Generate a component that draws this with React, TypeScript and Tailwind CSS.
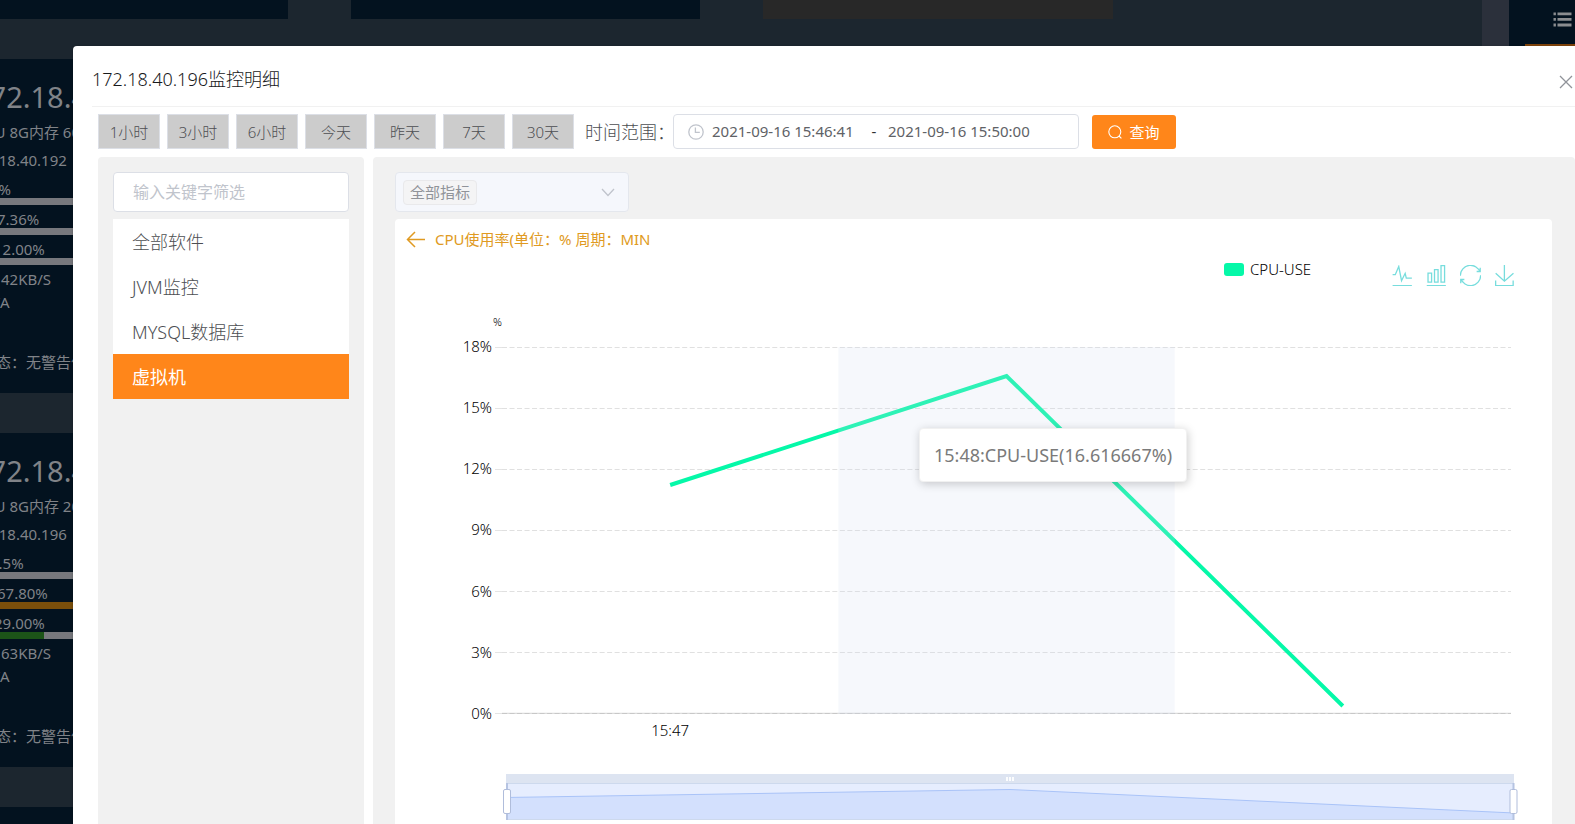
import React from "react";

type Metric = { name: string; padClass: string; value: string; fill?: number; fillClass?: string };
type Host = { ip: string; spec: string; metrics: Metric[]; net: string };

const hosts: Host[] = [
  {
    ip: "172.18.40.192",
    spec: "CPU 8G内存 60G硬盘",
    net: "42KB/S",
    metrics: [
      { name: "cpu", padClass: "pl-[21px]", value: "2%" },
      { name: "memory", padClass: "pl-[28px]", value: "7.36%" },
      { name: "disk", padClass: "pl-[25px]", value: "12.00%" },
    ],
  },
  {
    ip: "172.18.40.196",
    spec: "CPU 8G内存 200G硬盘",
    net: "63KB/S",
    metrics: [
      { name: "cpu", padClass: "pl-[21px]", value: "2.5%" },
      { name: "memory", padClass: "pl-[28px]", value: "67.80%", fill: 68, fillClass: "bg-[#7a4f0b]" },
      { name: "disk", padClass: "pl-[25px]", value: "29.00%", fill: 26, fillClass: "bg-[#1c5418]" },
    ],
  },
];

function HostCard({ host }: { host: Host }) {
  return (
    <section className="h-[334px] w-[350px] shrink-0 whitespace-nowrap bg-[#03121f] px-[31px] pt-4 text-[15px] text-[#808388]">
      <h2 className="pl-1 text-[29px] leading-[43px]">{host.ip}</h2>
      <p className="pl-[7px] leading-7">{host.spec}</p>
      <p className="leading-7">{host.ip}</p>
      <div className="mt-px">
        {host.metrics.map((m) => (
          <div key={m.name} className="pt-1.5">
            <p className={`leading-4 ${m.padClass}`}>{m.value}</p>
            <div className="mt-px h-[7px] bg-[#77787d]">
              {m.fill !== undefined && <div className={`h-full ${m.fillClass}`} style={{ width: `${m.fill}%` }} />}
            </div>
          </div>
        ))}
      </div>
      <p className="mt-[3px] pl-8 leading-[23px]">{host.net}</p>
      <p className="pl-3.5 leading-[23px]">N/A</p>
      <p className="mt-[37px] pl-3 leading-[23px]">状态：无警告信息</p>
    </section>
  );
}

function Backdrop() {
  return (
    <div className="absolute inset-0 flex overflow-hidden bg-[#1c262f]" aria-hidden="true">
      <div className="-ml-[62px] flex min-w-0 flex-1 flex-col gap-10">
        <div className="flex h-[19px] shrink-0 gap-[63px]">
          <div className="w-[350px] bg-[#03121f]" />
          <div className="w-[349px] bg-[#03121f]" />
          <div className="w-[350px] bg-[#282828]" />
        </div>
        {hosts.map((h) => (
          <HostCard key={h.ip} host={h} />
        ))}
        <div className="h-[334px] w-[350px] shrink-0 bg-[#03121f]" />
      </div>
      <div className="w-[27px] bg-[#2b303b]" />
      <div className="w-[66px] bg-[#03121f]">
        <div className="ml-4 flex h-[46px] items-center justify-center border-b-2 border-[#7f430b] pb-1.5 pl-6">
          <svg width="19" height="15" viewBox="0 0 19 15" stroke="#8b8d90" strokeWidth="2.8">
            <path d="M0.5 1.8h2.4M4.5 1.8h14M0.5 7.4h2.4M4.5 7.4h14M0.5 13h2.4M4.5 13h14" />
          </svg>
        </div>
      </div>
    </div>
  );
}

const ranges = ["1小时", "3小时", "6小时", "今天", "昨天", "7天", "30天"];

function Toolbar() {
  return (
    <div className="flex items-center pt-[7px] pl-[25px] text-[15px] text-[#606266]">
      <div className="flex shrink-0 gap-[7px]">
        {ranges.map((r) => (
          <button
            key={r}
            type="button"
            className="h-[35px] w-[62px] border border-[#dcdfe6] bg-[#ccc] leading-5 font-light text-[#4c4e52]"
          >
            {r}
          </button>
        ))}
      </div>
      <label htmlFor="range-start" className="ml-[11px] shrink-0 text-lg leading-none font-light text-[#4c4e52]">
        时间范围：
      </label>
      <div className="-ml-0.5 flex h-[35px] w-[406px] shrink-0 items-center rounded border border-[#dcdfe6] pl-3.5">
        <svg width="16" height="16" viewBox="0 0 16 16" fill="none" stroke="#c0c4cc" strokeWidth="1.3">
          <circle cx="8" cy="8" r="7.2" />
          <path d="M7.4 3.4v5h4.4" />
        </svg>
        <input id="range-start" defaultValue="2021-09-16 15:46:41" className="ml-2 w-[148px] outline-none" />
        <span className="w-7 text-center text-[#303133]">-</span>
        <input aria-label="结束时间" defaultValue="2021-09-16 15:50:00" className="w-[148px] outline-none" />
      </div>
      <button
        type="button"
        className="ml-[13px] flex h-[34px] w-[84px] shrink-0 items-center justify-center gap-[7px] rounded-[3px] bg-[#ff861a] leading-5 text-white"
      >
        <svg width="14" height="14" viewBox="0 0 14 14" fill="none" stroke="currentColor" strokeWidth="1.1">
          <circle cx="6.8" cy="6.8" r="6" />
          <path d="M11 11l2.4 2.4" />
        </svg>
        查询
      </button>
    </div>
  );
}

const categories = ["全部软件", "JVM监控", "MYSQL数据库", "虚拟机"];

function Sidebar() {
  return (
    <aside className="w-[266px] shrink-0 rounded-t bg-[#f1f1f1] p-[15px]">
      <input
        aria-label="筛选"
        placeholder="输入关键字筛选"
        className="h-10 w-full rounded border border-[#dcdfe6] bg-white px-[19px] text-base outline-none placeholder:text-[#c0c4cc]"
      />
      <ul className="mt-[7px] bg-white text-lg">
        {categories.map((c) => (
          <li key={c}>
            <button
              type="button"
              className={
                c === "虚拟机"
                  ? "block h-[45px] w-full bg-[#ff861a] pl-[19px] text-left text-white"
                  : "block h-[45px] w-full pl-[19px] text-left font-light text-[#4c4e52]"
              }
            >
              {c}
            </button>
          </li>
        ))}
      </ul>
    </aside>
  );
}

const tools = [
  { name: "折线图", box: "3 3 55 56", d: "M4.1,28.9h7.1l9.3-22l7.4,38l9.7-19.7l3,12.8h14.9M4.1,58h51.4" },
  { name: "柱状图", box: "1 0 59 59", d: "M6.7,22.9h10V48h-10V22.9zM24.9,13h10v35h-10V13zM43.2,2h10v46h-10V2zM3.1,58h53.7" },
  {
    name: "还原",
    box: "1 1 58 58",
    d: "M47,18.9h9.8V8.7M56.3,20.1C52.1,9,40.5,0.6,26.8,2.1C12.6,3.7,1.6,16.2,2.1,30.6M13,41.1H3.1v10.2M3.7,39.9c4.2,11.1,15.8,19.5,29.5,18c14.2-1.6,25.2-14.1,24.7-28.5",
  },
  { name: "下载", box: "0 0 59 59", d: "M4.7,22.9L29.3,45.5L54.7,23.4M4.6,43.6L4.6,58L53.8,58L53.8,43.6M29.2,45.1L29.2,0" },
];

const ticks = ["18%", "15%", "12%", "9%", "6%", "3%", "0%"];

function Chart() {
  return (
    <div className="text-[15px] font-light text-black">
      <div className="flex h-[92px] items-start justify-end pt-[3px] pr-[37px]">
        <div className="mr-[78px] flex items-center gap-1.5 leading-5">
          <span className="h-[13px] w-5 rounded-[3px] bg-[#05f8a8]" />
          <span className="w-16">CPU-USE</span>
        </div>
        <div className="flex gap-[13px] pt-1.5">
          {tools.map((t) => (
            <button key={t.name} type="button" aria-label={t.name}>
              <svg width="21" height="21" viewBox={t.box} fill="none" stroke="#77dddd" className="block">
                <path d={t.d} strokeWidth="1.3" vectorEffect="non-scaling-stroke" />
              </svg>
            </button>
          ))}
        </div>
      </div>
      <div className="-mt-[34px] h-4 pl-[98px] text-[11px] leading-4">%</div>
      <div className="mt-[7px] flex">
        <div className="-mt-px mb-px flex w-[97px] shrink-0 flex-col items-end justify-between">
          {ticks.map((t) => (
            <span key={t} className="leading-5">
              {t}
            </span>
          ))}
        </div>
        <div className="relative my-2.5 mr-[41px] ml-[3px] h-[367px] flex-1">
          <svg className="block h-full w-full" viewBox="0 0 1015 367" preserveAspectRatio="none" fill="none">
            {ticks.map((t, i) => (
              <path key={t} d={`M0 ${i * 61 + 0.5}H8`} stroke="#e4e4e4" />
            ))}
            <path d="M7 366.5H1015" stroke="#dcdcdc" strokeWidth="1.6" />
            {ticks.map((t, i) => (
              <path key={t} d={`M7 ${i * 61 + 0.5}H1015`} stroke={t === "0%" ? "#c8c8c8" : "#e0e0e0"} strokeDasharray="5 2.5" />
            ))}
            <path d="M175 138L511 29L847 359" stroke="#05f8a8" strokeWidth="4" />
            <rect x="343" y="0" width="336" height="367" fill="#d2dbee" fillOpacity="0.2" />
          </svg>
          <div className="absolute top-[81px] left-[424px] rounded border border-[#f1f1f1] bg-white px-3.5 py-[11px] text-lg leading-[30px] font-normal whitespace-nowrap text-[#7a7a7a] shadow-[1px_2px_10px_rgba(0,0,0,0.2)]">
            15:48:CPU-USE(16.616667%)
          </div>
        </div>
      </div>
      <div className="flex pr-[41px] pl-[107px] leading-5">
        <span className="-mt-1 w-1/3 text-center">15:47</span>
      </div>
      <div className="mt-[34px] mr-[34px] ml-[108px]">
        <svg className="block h-12 w-full" viewBox="0 0 1015 48" preserveAspectRatio="none" fill="none">
          <rect x="3" y="0" width="1008" height="9" fill="#dde4f1" />
          <rect x="3" y="9" width="1008" height="37" fill="#e6edfe" />
          <path d="M3 23.5L507 15.5L1011 39V46H3Z" fill="#d3e0fd" />
          <path d="M3 23.5L507 15.5L1011 39" stroke="#a9c3f8" />
          <path d="M3 9.5H1011M3 45.5H1011" stroke="#cdd9ed" />
          <path d="M504 3v4M507 3v4M510 3v4" stroke="#fff" strokeWidth="1.8" />
          <path d="M4 9V46M1010.500 9V46" stroke="#b6c4e2" strokeWidth="2" />
          <rect x="0.5" y="15.5" width="7" height="24" rx="1.5" fill="#fff" stroke="#b0bddb" />
          <rect x="1007" y="15.5" width="7" height="24" rx="1.5" fill="#fff" stroke="#b0bddb" />
        </svg>
      </div>
    </div>
  );
}

function Detail() {
  return (
    <main className="min-w-0 flex-1 rounded-t bg-[#f1f1f1] pt-[15px] pr-[23px] pl-[22px]">
      <button
        type="button"
        aria-haspopup="listbox"
        className="flex h-10 w-[234px] items-center justify-between rounded border border-[#e4e7ed] bg-[#f5f7fc] pr-[13px] pl-[7px] text-[15px] text-[#909399]"
      >
        <span className="flex h-[25px] items-center rounded border border-[#e9e9eb] bg-[#f4f4f5] px-1.5 leading-none">全部指标</span>
        <svg width="14" height="9" viewBox="0 0 14 9" fill="none" stroke="#c0c4cc" strokeWidth="1.3">
          <path d="M1 1l6 6.500L13 1" />
        </svg>
      </button>
      <div className="mt-[7px] h-full rounded bg-white">
        <a href="#back" className="flex items-center gap-2.5 px-[11px] pt-[9px] text-[15px] leading-[22px] text-[#e09a22]">
          <svg width="19" height="17" viewBox="0 0 19 17" fill="none" stroke="currentColor" strokeWidth="1.5">
            <path d="M19 8.500H1.500M9 1L1.500 8.500L9 16" />
          </svg>
          CPU使用率(单位：% 周期：MIN
        </a>
        <div className="pt-1.5">
          <Chart />
        </div>
      </div>
    </main>
  );
}

export default function App() {
  return (
    <div className="relative h-screen overflow-hidden font-['Noto_Sans','Noto_Sans_CJK_SC',sans-serif]">
      <Backdrop />
      <div
        role="dialog"
        aria-labelledby="dialog-title"
        className="absolute top-[46px] right-0 bottom-0 left-[73px] flex flex-col overflow-hidden rounded-tl-sm bg-white shadow-[0_1px_3px_rgba(0,0,0,0.3)]"
      >
        <header className="ml-[19px] flex h-[61px] shrink-0 items-center justify-between border-b border-[#f1f1f1] pt-1.5 pr-0.5">
          <h1 id="dialog-title" className="text-lg leading-6 font-light text-[#18191b]">
            172.18.40.196监控明细
          </h1>
          <button type="button" aria-label="关闭" className="pt-1.5">
            <svg width="14" height="14" viewBox="0 0 14 14" fill="none" stroke="#909399" strokeWidth="1.3">
              <path d="M1 1l12 12M13 1L1 13" />
            </svg>
          </button>
        </header>
        <Toolbar />
        <div className="mt-2 flex min-h-0 flex-1 gap-[9px] overflow-hidden pl-[25px]">
          <Sidebar />
          <Detail />
        </div>
      </div>
    </div>
  );
}
